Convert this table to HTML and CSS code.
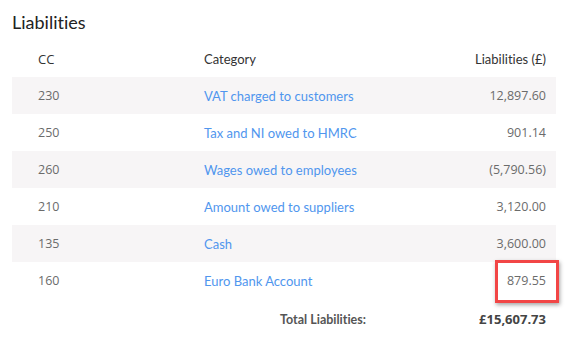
FILE: index.html
```html
<!DOCTYPE html>
<html>
<head>
<meta charset="utf-8">
<link rel="stylesheet" href="styles.css">
</head>
<body>
<div class="panel">
  <h2 class="title">Liabilities</h2>
  <table class="tbl">
    <thead>
      <tr>
        <th class="c-cc">CC</th>
        <th class="c-cat">Category</th>
        <th class="c-amt">Liabilities (£)</th>
      </tr>
    </thead>
    <tbody>
      <tr class="odd"><td class="c-cc num">230</td><td class="c-cat"><a>VAT charged to customers</a></td><td class="c-amt num">12,897.60</td></tr>
      <tr><td class="c-cc num">250</td><td class="c-cat"><a>Tax and NI owed to HMRC</a></td><td class="c-amt num">901.14</td></tr>
      <tr class="odd"><td class="c-cc num">260</td><td class="c-cat"><a>Wages owed to employees</a></td><td class="c-amt num">(5,790.56)</td></tr>
      <tr><td class="c-cc num">210</td><td class="c-cat"><a>Amount owed to suppliers</a></td><td class="c-amt num">3,120.00</td></tr>
      <tr class="odd"><td class="c-cc num">135</td><td class="c-cat"><a>Cash</a></td><td class="c-amt num">3,600.00</td></tr>
      <tr><td class="c-cc num">160</td><td class="c-cat"><a>Euro Bank Account</a></td><td class="c-amt num hl"><span class="mark">879.55</span></td></tr>
    </tbody>
    <tfoot>
      <tr><td></td><td class="tot-label">Total Liabilities:</td><td class="c-amt tot-val">£15,607.73</td></tr>
    </tfoot>
  </table>
</div>
</body>
</html>
```
FILE: styles.css
```css
html, body { margin: 0; padding: 0; background: #fff; }
body { font-family: "Lato", "Open Sans", sans-serif; color: #333; font-variant-ligatures: none; }
.panel { padding: 12px 12px 0 12px; width: 544px; }
.title { margin: 0; font-family: "Lato", sans-serif; font-weight: 400; font-size: 18px; line-height: 20px; color: #222; }
.tbl { width: 544px; border-collapse: collapse; margin-top: 8px; font-size: 13px; }
.tbl th, .tbl td { height: 37px; padding: 0; vertical-align: middle; text-align: left; }
.tbl th { font-weight: 400; color: #333; }
.tbl th.c-cc { font-family: "Open Sans", sans-serif; }
.c-cc { width: 166px; padding-left: 26px !important; }
.c-cat { width: 230px; }
.c-amt { text-align: right !important; padding-right: 10px !important; }
.odd td { background: #f7f5f6; }
.num { font-family: "Open Sans", sans-serif; color: #6b6b6b; font-size: 12.5px; }
.c-cat a { color: #5096ee; text-decoration: none; }
.tot-label { text-align: right !important; font-weight: 700; color: #555; padding-right: 68px !important; font-size: 12.5px; }
.tot-val { font-family: "Open Sans", sans-serif; font-weight: 700; color: #444; font-size: 13px; }
.tbl tfoot td { height: 40px; }
.hl { position: relative; }
.mark { position: relative; }
.mark::after { content: ""; position: absolute; left: -12px; right: -13px; top: -12px; bottom: -14px; border: 3px solid #f24646; box-shadow: 1px 2px 4px rgba(0,0,0,0.35); }
```
